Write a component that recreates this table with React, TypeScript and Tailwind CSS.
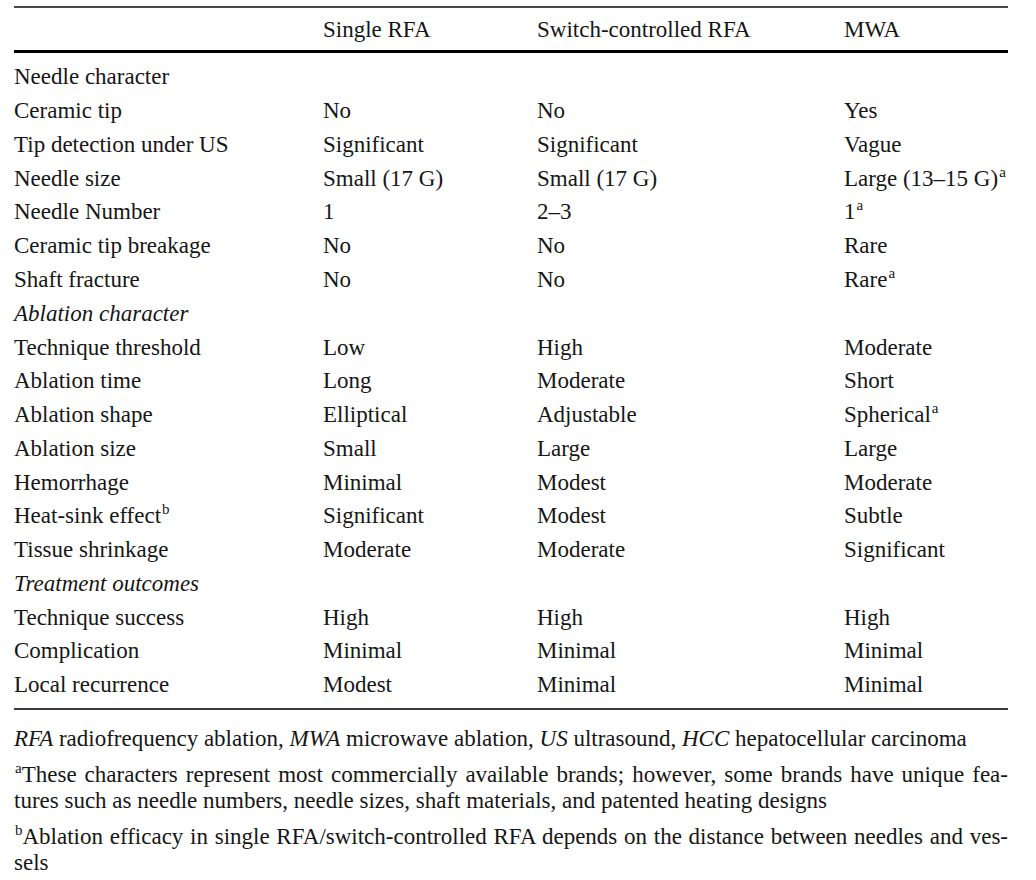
import React from "react";

type Cell = React.ReactNode;
type Row = { label: Cell; italic?: boolean; cells?: Cell[] };

const Sup = ({ children }: { children: React.ReactNode }) => (
  <span className="text-[15px] leading-none relative top-[-9px] ml-[1px]">{children}</span>
);

const rows: Row[] = [
  { label: "Needle character" },
  { label: "Ceramic tip", cells: ["No", "No", "Yes"] },
  { label: "Tip detection under US", cells: ["Significant", "Significant", "Vague"] },
  { label: "Needle size", cells: ["Small (17 G)", "Small (17 G)", <>Large (13–15 G)<Sup>a</Sup></>] },
  { label: "Needle Number", cells: ["1", "2–3", <>1<Sup>a</Sup></>] },
  { label: "Ceramic tip breakage", cells: ["No", "No", "Rare"] },
  { label: "Shaft fracture", cells: ["No", "No", <>Rare<Sup>a</Sup></>] },
  { label: "Ablation character", italic: true },
  { label: "Technique threshold", cells: ["Low", "High", "Moderate"] },
  { label: "Ablation time", cells: ["Long", "Moderate", "Short"] },
  { label: "Ablation shape", cells: ["Elliptical", "Adjustable", <>Spherical<Sup>a</Sup></>] },
  { label: "Ablation size", cells: ["Small", "Large", "Large"] },
  { label: "Hemorrhage", cells: ["Minimal", "Modest", "Moderate"] },
  { label: <>Heat-sink effect<Sup>b</Sup></>, cells: ["Significant", "Modest", "Subtle"] },
  { label: "Tissue shrinkage", cells: ["Moderate", "Moderate", "Significant"] },
  { label: "Treatment outcomes", italic: true },
  { label: "Technique success", cells: ["High", "High", "High"] },
  { label: "Complication", cells: ["Minimal", "Minimal", "Minimal"] },
  { label: "Local recurrence", cells: ["Modest", "Minimal", "Minimal"] },
];

export default function App() {
  return (
    <div
      className="w-[1036px] h-[880px] bg-white text-[#161616] overflow-hidden"
      style={{ fontFamily: '"Liberation Serif", "Times New Roman", serif' }}
    >
      <div className="ml-[14px] w-[994px] pt-[6px]">
        <div className="h-[2px] bg-[#4a4a4a]" />
        <div className="grid grid-cols-[309px_214px_307px_1fr] h-[42px] items-center text-[23px] leading-none pt-[1px]">
          <div />
          <div>Single RFA</div>
          <div>Switch-controlled RFA</div>
          <div>MWA</div>
        </div>
        <div className="h-[3px] bg-black" />
        <div className="pt-[7px]">
          {rows.map((r, i) => (
            <div
              key={i}
              className="grid grid-cols-[309px_214px_307px_1fr] h-[33.78px] items-center text-[23px] leading-none"
            >
              <div className={r.italic ? "italic" : ""}>{r.label}</div>
              {r.cells ? r.cells.map((c, j) => <div key={j}>{c}</div>) : null}
            </div>
          ))}
        </div>
        <div className="mt-[6px] h-[2px] bg-[#3a3a3a]" />
        <div className="pt-[16px] text-[23px] leading-[26px]">
          <p>
            <i>RFA</i> radiofrequency ablation, <i>MWA</i> microwave ablation, <i>US</i> ultrasound,{" "}
            <i>HCC</i> hepatocellular carcinoma
          </p>
          <div className="mt-[10px]">
            <p className="text-justify [text-align-last:justify]">
              <Sup>a</Sup>These characters represent most commercially available brands; however, some brands have unique fea-
            </p>
            <p>tures such as needle numbers, needle sizes, shaft materials, and patented heating designs</p>
          </div>
          <div className="mt-[10px]">
            <p className="text-justify [text-align-last:justify]">
              <Sup>b</Sup>Ablation efficacy in single RFA/switch-controlled RFA depends on the distance between needles and ves-
            </p>
            <p>sels</p>
          </div>
        </div>
      </div>
    </div>
  );
}
